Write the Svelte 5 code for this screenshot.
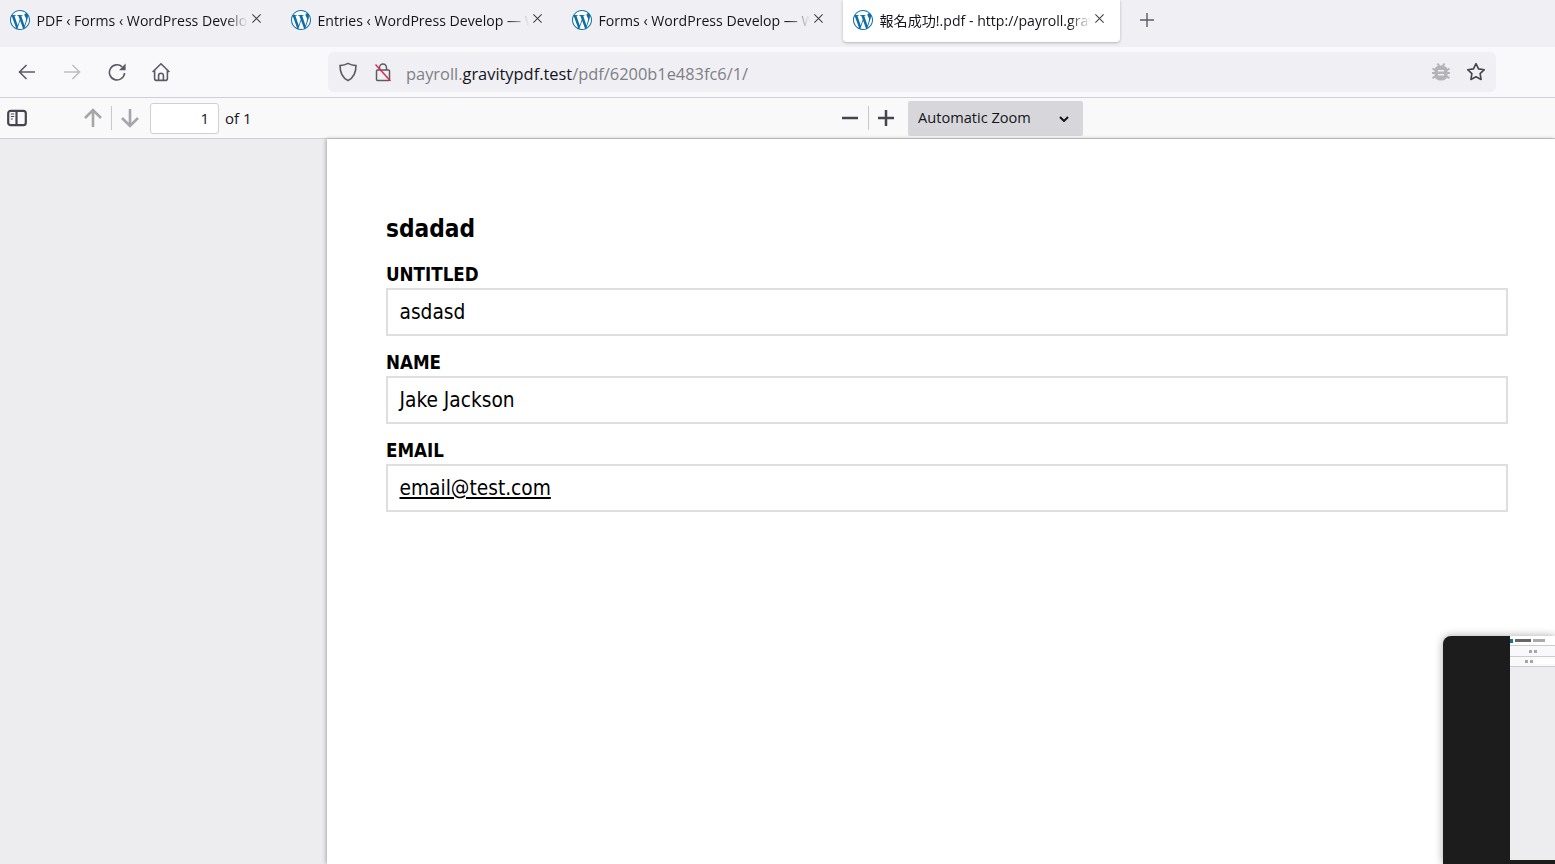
<script>
    const tabs = [
        { title: "PDF ‹ Forms ‹ WordPress Develop — WordPress", active: false },
        { title: "Entries ‹ WordPress Develop — WordPress", active: false },
        { title: "Forms ‹ WordPress Develop — WordPress", active: false },
        { title: "報名成功!.pdf - http://payroll.gravitypdf.test", active: true }
    ];
    const fields = [
        { label: "UNTITLED", value: "asdasd" },
        { label: "NAME", value: "Jake Jackson" },
        { label: "EMAIL", value: "email@test.com", link: true }
    ];
    const wp = "M21.469 6.825c.84 1.537 1.318 3.3 1.318 5.175 0 3.979-2.156 7.456-5.363 9.325l3.295-9.527c.615-1.54.82-2.771.82-3.864 0-.405-.026-.78-.07-1.11m-7.981.105c.647-.03 1.232-.105 1.232-.105.582-.075.514-.93-.067-.899 0 0-1.755.135-2.88.135-1.064 0-2.85-.15-2.85-.15-.585-.03-.661.855-.075.885 0 0 .54.061 1.125.09l1.68 4.605-2.37 7.08L5.354 6.9c.649-.03 1.234-.1 1.234-.1.585-.075.516-.93-.065-.896 0 0-1.746.138-2.874.138-.2 0-.438-.008-.69-.015C4.911 3.15 8.235 1.215 12 1.215c2.809 0 5.365 1.072 7.286 2.833-.046-.003-.091-.009-.141-.009-1.06 0-1.812.923-1.812 1.914 0 .89.513 1.643 1.06 2.531.411.72.89 1.643.89 2.977 0 .915-.354 1.994-.821 3.479l-1.075 3.585-3.9-11.61.001.014zM12 22.784c-1.059 0-2.081-.153-3.048-.437l3.237-9.406 3.315 9.087c.024.053.05.101.078.149-1.12.393-2.325.609-3.582.609M1.211 12c0-1.564.336-3.05.935-4.39L7.29 21.709C3.694 19.96 1.212 16.271 1.211 12M12 0C5.385 0 0 5.385 0 12s5.385 12 12 12 12-5.385 12-12S18.615 0 12 0";
</script>

<div class="browser">
    <div class="tabbar">
        {#each tabs as tab}
            <div class="tab" class:active={tab.active}>
                <svg class="favicon" viewBox="0 0 24 24">
                    <circle cx="12" cy="12" r="12" fill="#fff" />
                    <path d={wp} fill="#0f6ea5" fill-rule="evenodd" />
                </svg>
                <span class="title">{tab.title}</span>
                <svg class="close" viewBox="0 0 12 12"><path d="M1.5 1.5l9 9M10.5 1.5l-9 9" /></svg>
            </div>
        {/each}
        <svg class="newtab" viewBox="0 0 16 16"><path d="M8 1v14M1 8h14" /></svg>
    </div>

    <div class="navbar">
        <svg class="nav-icon back" viewBox="0 0 20 20"><path d="M18 10H2.5M9.5 3l-7 7 7 7" /></svg>
        <svg class="nav-icon forward" viewBox="0 0 20 20"><path d="M2 10h15.5M10.5 3l7 7-7 7" /></svg>
        <svg class="nav-icon reload" viewBox="0 0 20 20"><path d="M16.6 11a7.600 7.600 0 1 1-2.400-6.200" /><path class="solid" d="M17.600 1.600v6.600H11z" /></svg>
        <svg class="nav-icon home" viewBox="0 0 20 20"><path d="M1.600 10 10 1.800l8.400 8.200M3.600 8.400v8a2 2 0 0 0 2 2h8.800a2 2 0 0 0 2-2v-8M7.600 18.200v-4.600a2.400 2.400 0 0 1 4.800 0v4.600" /></svg>
        <div class="urlbar">
            <svg class="shield" viewBox="0 0 20 20"><path d="M10 1.400c2.400 1.400 5 2 8 2.200 0 7.400-2.400 12.400-8 15-5.600-2.600-8-7.600-8-15 3-.2 5.600-.8 8-2.200z" /></svg>
            <svg class="lock" viewBox="0 0 18 20">
                <path class="lock-body" d="M5.500 8V5.500a3.500 3.500 0 0 1 7 0V8M3.500 8h11a1 1 0 0 1 1 1v8.500a1 1 0 0 1-1 1h-11a1 1 0 0 1-1-1V9a1 1 0 0 1 1-1z" />
                <path class="lock-slash" d="M1.500 2.500 16.500 19" />
            </svg>
            <div class="url"><span class="dim">payroll.</span>gravitypdf.test<span class="dim">/pdf/6200b1e483fc6/1/</span></div>
            <svg class="bug" viewBox="0 0 20 20">
                <path d="M6.500 1.500l2 3M13.500 1.500l-2 3M1.500 6.500l3 2M18.500 6.500l-3 2M1 11h3M19 11h-3M1.500 16l3-1.500M18.500 16l-3-1.500" />
                <path class="bug-body" d="M10 3.500c3.600 0 6.500 1.600 6.500 4.500v5.500c0 3-2.900 5-6.500 5s-6.500-2-6.500-5V8c0-2.900 2.900-4.500 6.500-4.500zM7 8v1.500h6V8zm0 4v1.500h6V12z" />
            </svg>
            <svg class="star" viewBox="0 0 20 20"><path d="M10 1.600l2.500 5.300 5.800.8-4.200 4 1 5.800L10 14.700l-5.100 2.800 1-5.800-4.200-4 5.800-.8z" /></svg>
        </div>
    </div>

    <div class="pdfbar">
        <div class="pdfbar-left">
            <svg class="sidebar-toggle" viewBox="0 0 20 18">
                <rect x="1.200" y="1.800" width="17.600" height="14.400" rx="2.500" />
                <path d="M9.500 1.800v14.400" />
                <path class="thin" d="M3.800 5h3.400M3.800 7.500h3.400M3.800 10h2" />
            </svg>
            <svg class="pdf-arrow up" viewBox="0 0 20 20"><path d="M10 19V2M2 10l8-8 8 8" /></svg>
            <span class="divider"></span>
            <svg class="pdf-arrow down" viewBox="0 0 20 20"><path d="M10 1v17M2 10l8 8 8-8" /></svg>
            <div class="page-input">1</div>
            <span class="page-count">of 1</span>
        </div>
        <svg class="zoom-icon minus" viewBox="0 0 16 16"><path d="M0 8h16" /></svg>
        <span class="divider zoom-div"></span>
        <svg class="zoom-icon plus" viewBox="0 0 16 16"><path d="M8 0v16M0 8h16" /></svg>
        <div class="zoom-select">
            <span>Automatic Zoom</span>
            <svg class="chevron" viewBox="0 0 10 6"><path d="M1 1l4 4 4-4" /></svg>
        </div>
    </div>

    <div class="viewer">
        <main class="page">
            <h1>sdadad</h1>
            {#each fields as field}
                <div class="field">
                    <div class="label">{field.label}</div>
                    <div class="value"><span class:link={field.link}>{field.value}</span></div>
                </div>
            {/each}
        </main>
    </div>

    <!-- Windows alt-tab style preview peeking in from the corner -->
    <div class="preview">
        <div class="mini">
            <div class="mini-tabs"><span class="mini-fav"></span><span class="mini-text"></span><span class="mini-text short"></span></div>
            <div class="mini-nav"><span class="mini-ico"></span><span class="mini-ico"></span></div>
            <div class="mini-tool"><span class="mini-ico"></span><span class="mini-ico"></span><span class="mini-input"></span></div>
            <div class="mini-body"></div>
        </div>
    </div>
</div>

<style>
    :global(body) {
        margin: 0;
        background: #fff;
    }
    .browser {
        position: relative;
        display: flex;
        flex-direction: column;
        width: 1555px;
        height: 864px;
        overflow: hidden;
        font-family: "Open Sans", "Noto Sans CJK TC", sans-serif;
        color: #15141a;
    }

    /* --- tabs --- */
    .tabbar {
        display: flex;
        flex: 0 0 47px;
        align-items: flex-start;
        gap: 4px;
        background: #f0f0f4;
        box-sizing: border-box;
    }
    .tab {
        display: flex;
        align-items: center;
        width: 277px;
        height: 42px;
        box-sizing: border-box;
        padding: 0 15px 2px 10px;
    }
    .tab.active {
        background: #fff;
        border-radius: 0 0 4px 4px;
        box-shadow: 0 1px 3px rgba(0, 0, 0, 0.25);
    }
    .favicon {
        flex: none;
        width: 20px;
        height: 20px;
        margin: -1px 6.500px 0 0;
    }
    .title {
        flex: 1;
        min-width: 0;
        overflow: hidden;
        white-space: nowrap;
        font-size: 14.100px;
        -webkit-mask-image: linear-gradient(to right, #000 calc(100% - 22px), transparent);
        mask-image: linear-gradient(to right, #000 calc(100% - 22px), transparent);
    }
    .close {
        flex: none;
        width: 11px;
        height: 11px;
        margin: -3px 0 0 3px;
        fill: none;
        stroke: #3c3b42;
        stroke-width: 1.100;
    }
    .newtab {
        width: 16px;
        height: 16px;
        margin: 12px 0 0 15px;
        fill: none;
        stroke: #5b5b66;
        stroke-width: 1.400;
    }

    /* --- nav --- */
    .navbar {
        display: flex;
        flex: 0 0 51px;
        align-items: center;
        box-sizing: border-box;
        background: #f9f9fb;
        border-bottom: 1px solid #cfcfd8;
        padding-bottom: 1px;
    }
    .nav-icon {
        flex: none;
        width: 20px;
        height: 20px;
        fill: none;
        stroke: #5b5b66;
        stroke-width: 1.600;
    }
    .nav-icon .solid {
        fill: #5b5b66;
        stroke: none;
    }
    .back { margin-left: 17px; }
    .forward { margin-left: 25px; stroke: #bdbdc3; }
    .reload { margin-left: 26px; }
    .home { margin-left: 23px; }
    .urlbar {
        display: flex;
        align-items: center;
        width: 1168px;
        height: 40px;
        margin-left: 157px;
        box-sizing: border-box;
        background: #f0f0f4;
        border-radius: 6px;
        padding: 0 10px;
    }
    .shield {
        flex: none;
        width: 20px;
        height: 20px;
        fill: none;
        stroke: #5b5b66;
        stroke-width: 1.600;
    }
    .lock {
        flex: none;
        width: 18px;
        height: 20px;
        margin-left: 16px;
        fill: none;
    }
    .lock-body { stroke: #5b5b66; stroke-width: 1.500; }
    .lock-slash { stroke: #e22850; stroke-width: 1.500; }
    .url {
        flex: 1;
        margin-left: 14px;
        padding-top: 4px;
        font-size: 16.400px;
        white-space: nowrap;
    }
    .dim { color: #7e7e86; }
    .bug {
        flex: none;
        width: 20px;
        height: 20px;
        fill: none;
        stroke: #b4b4b8;
        stroke-width: 2;
    }
    .bug-body {
        fill: #b4b4b8;
        stroke: none;
        fill-rule: evenodd;
    }
    .star {
        flex: none;
        width: 20px;
        height: 20px;
        margin-left: 15px;
        margin-right: 0;
        fill: none;
        stroke: #45454d;
        stroke-width: 1.600;
        stroke-linejoin: round;
    }

    /* --- pdf toolbar --- */
    .pdfbar {
        display: flex;
        flex: 0 0 41px;
        align-items: center;
        box-sizing: border-box;
        background: #f9f9fa;
        border-bottom: 1px solid #cfcfd8;
    }
    .pdfbar-left {
        display: flex;
        flex: 0 0 842px;
        align-items: center;
    }
    .sidebar-toggle {
        flex: none;
        width: 20px;
        height: 18px;
        margin-left: 7px;
        fill: none;
        stroke: #45454d;
        stroke-width: 2.200;
    }
    .sidebar-toggle .thin { stroke-width: 1.200; }
    .pdf-arrow {
        flex: none;
        width: 20px;
        height: 20px;
        fill: none;
        stroke: #a5a5aa;
        stroke-width: 2.600;
    }
    .up { margin-left: 56px; }
    .down { margin-left: 8px; }
    .divider {
        flex: none;
        width: 1px;
        height: 24px;
        margin-left: 8px;
        background: #c8c8cc;
    }
    .page-input {
        width: 69px;
        height: 31px;
        margin-left: 10px;
        box-sizing: border-box;
        background: #fff;
        border: 1px solid #cfcfd8;
        border-radius: 3px;
        padding-right: 9px;
        text-align: right;
        font-size: 15px;
        line-height: 28px;
    }
    .page-count {
        margin-left: 6px;
        font-size: 15px;
    }
    .zoom-icon {
        flex: none;
        width: 16px;
        height: 16px;
        fill: none;
        stroke: #45454d;
        stroke-width: 2.500;
    }
    .zoom-div { margin-left: 10px; }
    .plus { margin-left: 9px; }
    .zoom-select {
        display: flex;
        align-items: center;
        justify-content: space-between;
        width: 175px;
        height: 35px;
        margin-left: 14px;
        box-sizing: border-box;
        background: #d7d7db;
        border-radius: 2px;
        padding: 0 14px 2px 10px;
        font-size: 14.600px;
    }
    .chevron {
        width: 10px;
        height: 6px;
        margin-top: 3px;
        fill: none;
        stroke: #15141a;
        stroke-width: 2;
    }

    /* --- document --- */
    .viewer {
        flex: 1;
        min-height: 0;
        background: #ededf0;
        padding-left: 327px;
    }
    .page {
        height: 100%;
        box-sizing: border-box;
        background: #fff;
        box-shadow: -1px 0 4px rgba(0, 0, 0, 0.3);
        padding: 75px 47px 0 59px;
        font-family: "DejaVu Sans Condensed", "DejaVu Sans", sans-serif;
        font-stretch: condensed;
        color: #000;
    }
    h1 {
        margin: 0 0 20px;
        font-size: 24.200px;
        line-height: 30px;
        font-weight: 700;
    }
    .field { margin-bottom: 16px; }
    .label {
        font-size: 18.600px;
        line-height: 22px;
        font-weight: 700;
        margin-bottom: 2px;
    }
    .value {
        height: 48px;
        box-sizing: border-box;
        border: 2px solid #dfdfdf;
        padding-left: 11.500px;
        font-size: 20.700px;
        line-height: 44px;
    }
    .link { text-decoration: underline; }

    /* --- preview overlay --- */
    .preview {
        position: absolute;
        left: 1443px;
        top: 636px;
        width: 112px;
        height: 228px;
        box-sizing: border-box;
        padding: 0 0 4px 67px;
        background: #1c1c1c;
        border-radius: 8px 0 0 0;
        box-shadow: 0 0 8px rgba(0, 0, 0, 0.35);
    }
    .mini {
        display: flex;
        flex-direction: column;
        height: 100%;
        background: #ededf0;
    }
    .mini-tabs, .mini-nav, .mini-tool {
        display: flex;
        align-items: center;
        gap: 2px;
        flex: none;
        box-sizing: border-box;
        background: #fff;
        border-bottom: 1px solid #ccc;
    }
    .mini-tabs { height: 10px; }
    .mini-nav { height: 11px; justify-content: center; background: #f9f9fb; }
    .mini-tool { height: 10px; justify-content: flex-end; background: #f9f9fa; }
    .mini-fav { width: 3px; height: 4px; background: #1670a0; }
    .mini-text { width: 16px; height: 3px; background: #666; }
    .mini-text.short { width: 12px; background: #aaa; }
    .mini-ico { width: 3px; height: 3px; background: #a5a5aa; }
    .mini-input { width: 20px; height: 5px; background: #fff; }
    .mini-body { flex: 1; }
</style>
